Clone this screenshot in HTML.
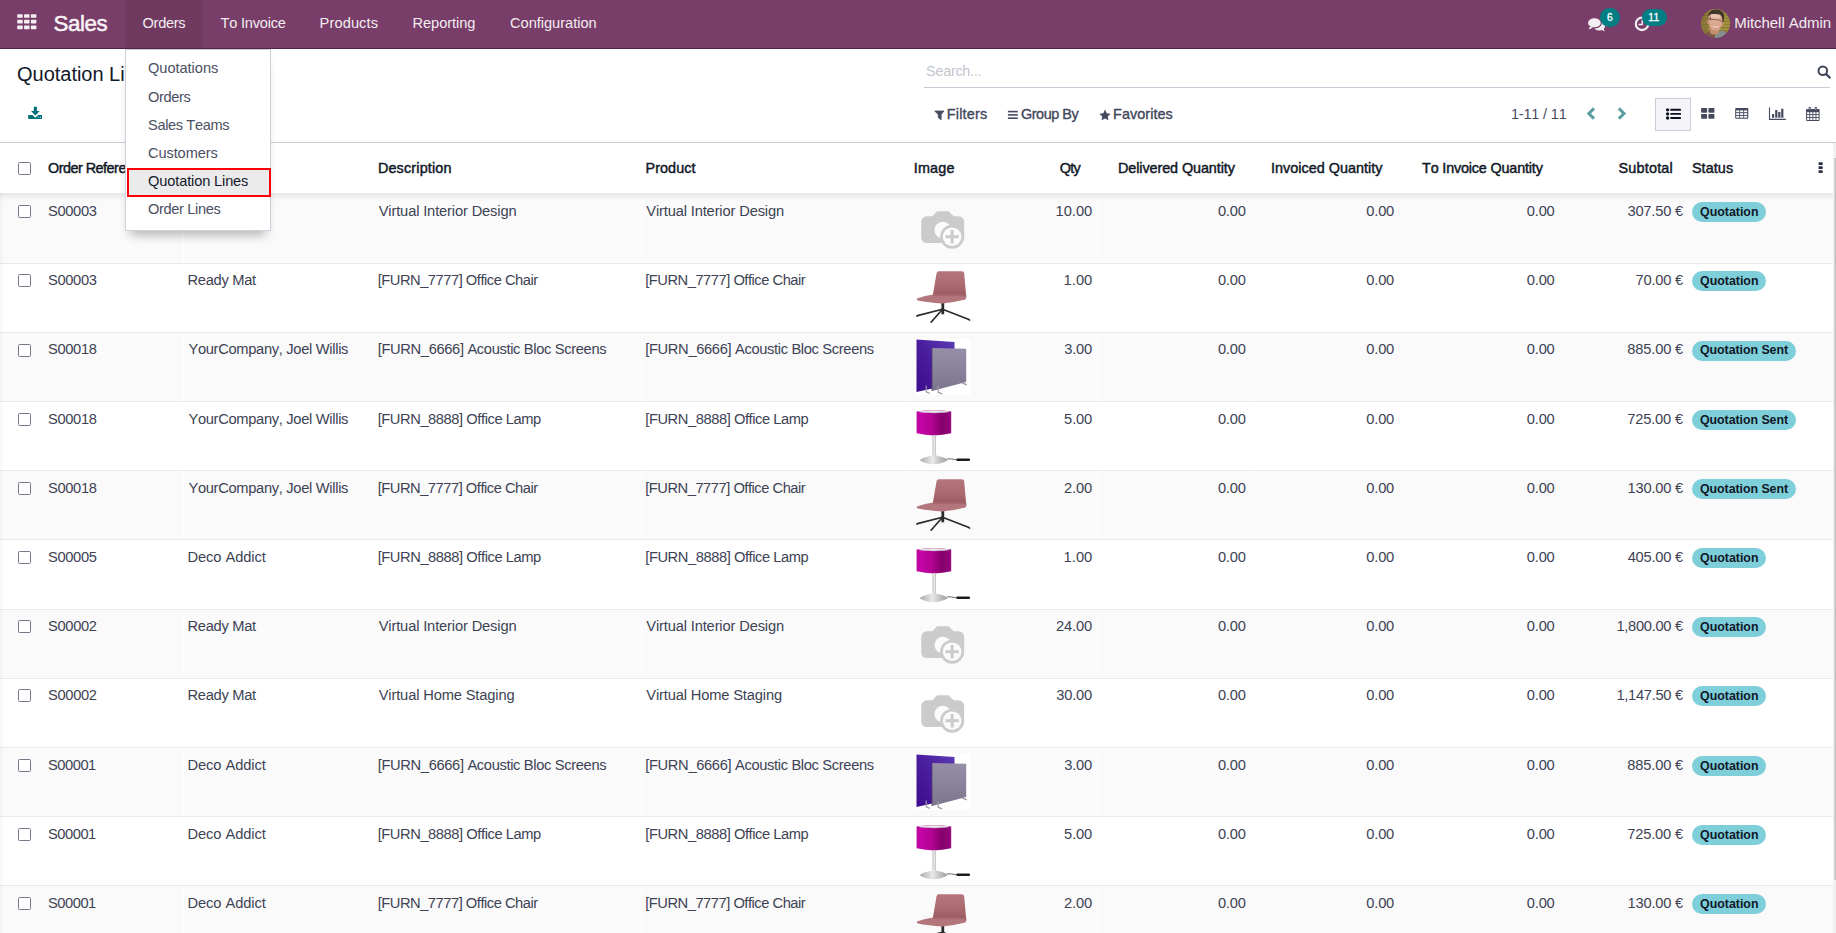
<!DOCTYPE html>
<html lang="en"><head><meta charset="utf-8"><title>Odoo - Quotation Lines</title>
<style>
html,body{margin:0;padding:0;}
body{width:1836px;height:933px;overflow:hidden;position:relative;background:#fff;font-family:"Liberation Sans", sans-serif;font-kerning:none;color:#3d4354;}
.t{position:absolute;white-space:pre;display:block;}
.abs{position:absolute;}
svg{display:block;overflow:visible;}
</style></head><body>
<div style="position:absolute;left:0px;top:194px;width:1833px;height:69px;background:#fafafb;border-bottom:1px solid #e7e9ed;"></div>
<div style="position:absolute;left:183px;top:194px;width:1px;height:69px;background:#fff;opacity:.8;"></div>
<div style="position:absolute;left:641px;top:194px;width:1px;height:69px;background:#fff;opacity:.8;"></div>
<div style="position:absolute;left:909px;top:194px;width:1px;height:69px;background:#fff;opacity:.8;"></div>
<div style="position:absolute;left:1097px;top:194px;width:1px;height:69px;background:#fff;opacity:.8;"></div>
<div style="position:absolute;left:1250px;top:194px;width:1px;height:69px;background:#fff;opacity:.8;"></div>
<div style="position:absolute;left:18px;top:205px;width:11px;height:11px;border:1px solid #74778a;border-radius:1.5px;background:#fff;"></div>
<span class="t" style="left:48.03px;top:201.81px;font-size:14.7px;line-height:18px;letter-spacing:-0.354px;">S00003</span>
<span class="t" style="left:187.54px;top:201.81px;font-size:14.7px;line-height:18px;letter-spacing:-0.308px;">Ready Mat</span>
<span class="t" style="left:378.69px;top:201.81px;font-size:14.7px;line-height:18px;letter-spacing:-0.151px;">Virtual Interior Design</span>
<span class="t" style="left:646.24px;top:201.81px;font-size:14.7px;line-height:18px;letter-spacing:-0.151px;">Virtual Interior Design</span>
<svg style="position:absolute;left:915.75px;top:199.7px;" width="56" height="56" viewBox="0 0 56 56"><path d="M10.75 16.30H16.35L21.15 11.20H32.55L37.65 16.30H42.65a5.500 5.500 0 0 1 5.500 5.500V37.50a5.500 5.500 0 0 1-5.500 5.500H10.75a5.500 5.500 0 0 1-5.500-5.500V21.80a5.500 5.500 0 0 1 5.500-5.500z" fill="#cbcbcb"/><circle cx="26.85" cy="30.10" r="8.400" fill="#fbfbfb"/><circle cx="36.15" cy="36.70" r="12" fill="#cbcbcb"/><circle cx="36.15" cy="36.70" r="9.300" fill="#fbfbfb"/><rect x="29.40" y="35.20" width="13.500" height="3" fill="#cbcbcb"/><rect x="34.65" y="29.95" width="3" height="13.500" fill="#cbcbcb"/></svg>
<span class="t" style="left:1055.58px;top:201.81px;font-size:14.7px;line-height:18px;letter-spacing:-0.023px;">10.00</span>
<span class="t" style="left:1217.93px;top:201.81px;font-size:14.7px;line-height:18px;letter-spacing:-0.221px;">0.00</span>
<span class="t" style="left:1366.33px;top:201.81px;font-size:14.7px;line-height:18px;letter-spacing:-0.221px;">0.00</span>
<span class="t" style="left:1526.83px;top:201.81px;font-size:14.7px;line-height:18px;letter-spacing:-0.221px;">0.00</span>
<span class="t" style="left:1627.44px;top:201.81px;font-size:14.7px;line-height:18px;letter-spacing:-0.208px;">307.50 €</span>
<div style="position:absolute;left:1692px;top:202px;width:74px;height:20px;background:#7fcfda;border-radius:10px;"></div>
<span class="t" style="left:1699.99px;top:203.70px;font-size:12.4px;line-height:16px;letter-spacing:0.004px;font-weight:bold;color:#111827;">Quotation</span>
<div style="position:absolute;left:0px;top:264px;width:1833px;height:68px;background:#ffffff;border-bottom:1px solid #e7e9ed;"></div>
<div style="position:absolute;left:18px;top:274px;width:11px;height:11px;border:1px solid #74778a;border-radius:1.5px;background:#fff;"></div>
<span class="t" style="left:48.03px;top:270.81px;font-size:14.7px;line-height:18px;letter-spacing:-0.354px;">S00003</span>
<span class="t" style="left:187.54px;top:270.81px;font-size:14.7px;line-height:18px;letter-spacing:-0.308px;">Ready Mat</span>
<span class="t" style="left:377.70px;top:270.81px;font-size:14.7px;line-height:18px;letter-spacing:-0.477px;">[FURN_7777] Office Chair</span>
<span class="t" style="left:645.25px;top:270.81px;font-size:14.7px;line-height:18px;letter-spacing:-0.477px;">[FURN_7777] Office Chair</span>
<svg style="position:absolute;left:915.75px;top:268.7px;" width="56" height="56" viewBox="0 0 56 56"><defs><linearGradient id="chg" x1="0" y1="0" x2="0" y2="1"><stop offset="0" stop-color="#b5757c"/><stop offset=".6" stop-color="#a9696f"/><stop offset="1" stop-color="#98585f"/></linearGradient></defs><g stroke="#2b2b2d" stroke-width="1.700" stroke-linecap="round" fill="none"><path d="M26.5 40.3L1.5 46.6"/><path d="M26.5 40.3L15.5 52.7"/><path d="M26.5 40.3L53.0 50.5"/><path d="M26.8 33.3V45.3" stroke-width="2.800" stroke-linecap="butt"/></g><path d="M0.9 46.5v1.300M53.5 50.5v1.300M15.1 52.7v1" stroke="#2b2b2d" stroke-width="1.600"/><path d="M23.0 2.3H45.8q2.300 0 2.400 2.300L50.2 27.3L16.6 27.3L20.5 4.6q.3-2.300 2.500-2.300z" fill="url(#chg)"/><path d="M0.9 29.5Q9.2 26.6 17.2 25.5L50.2 25.8Q51.0 28.8 49.5 30.5Q37.2 33.6 26.2 34.6Q12.2 33.8 1.8 31.6Q0.2 30.6 0.9 29.5z" fill="#b4767d"/><path d="M17.2 26.3L50.0 26.6" stroke="#9a5b62" stroke-width="1.200" opacity=".55"/></svg>
<span class="t" style="left:1063.58px;top:270.81px;font-size:14.7px;line-height:18px;letter-spacing:0.028px;">1.00</span>
<span class="t" style="left:1217.93px;top:270.81px;font-size:14.7px;line-height:18px;letter-spacing:-0.221px;">0.00</span>
<span class="t" style="left:1366.33px;top:270.81px;font-size:14.7px;line-height:18px;letter-spacing:-0.221px;">0.00</span>
<span class="t" style="left:1526.83px;top:270.81px;font-size:14.7px;line-height:18px;letter-spacing:-0.221px;">0.00</span>
<span class="t" style="left:1635.55px;top:270.81px;font-size:14.7px;line-height:18px;letter-spacing:-0.231px;">70.00 €</span>
<div style="position:absolute;left:1692px;top:271px;width:74px;height:20px;background:#7fcfda;border-radius:10px;"></div>
<span class="t" style="left:1699.99px;top:272.70px;font-size:12.4px;line-height:16px;letter-spacing:0.004px;font-weight:bold;color:#111827;">Quotation</span>
<div style="position:absolute;left:0px;top:333px;width:1833px;height:68px;background:#fafafb;border-bottom:1px solid #e7e9ed;"></div>
<div style="position:absolute;left:183px;top:333px;width:1px;height:68px;background:#fff;opacity:.8;"></div>
<div style="position:absolute;left:641px;top:333px;width:1px;height:68px;background:#fff;opacity:.8;"></div>
<div style="position:absolute;left:909px;top:333px;width:1px;height:68px;background:#fff;opacity:.8;"></div>
<div style="position:absolute;left:1097px;top:333px;width:1px;height:68px;background:#fff;opacity:.8;"></div>
<div style="position:absolute;left:1250px;top:333px;width:1px;height:68px;background:#fff;opacity:.8;"></div>
<div style="position:absolute;left:18px;top:344px;width:11px;height:11px;border:1px solid #74778a;border-radius:1.5px;background:#fff;"></div>
<span class="t" style="left:48.03px;top:339.81px;font-size:14.7px;line-height:18px;letter-spacing:-0.355px;">S00018</span>
<span class="t" style="left:188.43px;top:339.81px;font-size:14.7px;line-height:18px;letter-spacing:-0.318px;">YourCompany, Joel Willis</span>
<span class="t" style="left:377.70px;top:339.81px;font-size:14.7px;line-height:18px;letter-spacing:-0.348px;">[FURN_6666] Acoustic Bloc Screens</span>
<span class="t" style="left:645.25px;top:339.81px;font-size:14.7px;line-height:18px;letter-spacing:-0.348px;">[FURN_6666] Acoustic Bloc Screens</span>
<svg style="position:absolute;left:915.75px;top:338.7px;" width="56" height="56" viewBox="0 0 56 56"><defs><linearGradient id="scg1" x1="0" y1="1" x2="1" y2="0"><stop offset="0" stop-color="#3f0b8e"/><stop offset=".5" stop-color="#4a1d9e"/><stop offset="1" stop-color="#5b3cb4"/></linearGradient><linearGradient id="scg2" x1="0" y1="0" x2="0" y2="1"><stop offset="0" stop-color="#978ea8"/><stop offset="1" stop-color="#7d758e"/></linearGradient></defs><rect x="0" y="0" width="54.500" height="55.500" fill="#fff"/><path d="M0.5 0.6L38.5 2.9V44.4L0.5 52.9z" fill="url(#scg1)"/><path d="M16.0 8.9L50.2 9.7V43.1L16.0 52.1z" fill="url(#scg2)"/><path d="M16.0 8.9V52.1" stroke="#4a4660" stroke-width=".8"/><g stroke="#9a9aa3" stroke-width="1.200" fill="none"><path d="M10.2 46.4V52.9l3.500 1.500"/><path d="M22.2 46.9V53.4l4 1.500"/><path d="M46.2 43.9l4.500 2"/></g></svg>
<span class="t" style="left:1064.14px;top:339.81px;font-size:14.7px;line-height:18px;letter-spacing:-0.159px;">3.00</span>
<span class="t" style="left:1217.93px;top:339.81px;font-size:14.7px;line-height:18px;letter-spacing:-0.221px;">0.00</span>
<span class="t" style="left:1366.33px;top:339.81px;font-size:14.7px;line-height:18px;letter-spacing:-0.221px;">0.00</span>
<span class="t" style="left:1526.83px;top:339.81px;font-size:14.7px;line-height:18px;letter-spacing:-0.221px;">0.00</span>
<span class="t" style="left:1627.36px;top:339.81px;font-size:14.7px;line-height:18px;letter-spacing:-0.196px;">885.00 €</span>
<div style="position:absolute;left:1692px;top:341px;width:104.25px;height:20px;background:#7fcfda;border-radius:10px;"></div>
<span class="t" style="left:1699.99px;top:341.70px;font-size:12.4px;line-height:16px;letter-spacing:-0.054px;font-weight:bold;color:#111827;">Quotation Sent</span>
<div style="position:absolute;left:0px;top:402px;width:1833px;height:68px;background:#ffffff;border-bottom:1px solid #e7e9ed;"></div>
<div style="position:absolute;left:18px;top:413px;width:11px;height:11px;border:1px solid #74778a;border-radius:1.5px;background:#fff;"></div>
<span class="t" style="left:48.03px;top:409.81px;font-size:14.7px;line-height:18px;letter-spacing:-0.355px;">S00018</span>
<span class="t" style="left:188.43px;top:409.81px;font-size:14.7px;line-height:18px;letter-spacing:-0.318px;">YourCompany, Joel Willis</span>
<span class="t" style="left:377.70px;top:409.81px;font-size:14.7px;line-height:18px;letter-spacing:-0.434px;">[FURN_8888] Office Lamp</span>
<span class="t" style="left:645.25px;top:409.81px;font-size:14.7px;line-height:18px;letter-spacing:-0.434px;">[FURN_8888] Office Lamp</span>
<svg style="position:absolute;left:915.75px;top:407.7px;" width="56" height="58" viewBox="0 0 56 58"><defs><linearGradient id="lmg" x1="0" x2="1"><stop offset="0" stop-color="#b8059b"/><stop offset=".12" stop-color="#c603a9"/><stop offset=".45" stop-color="#b00391"/><stop offset=".72" stop-color="#87006e"/><stop offset=".9" stop-color="#8d0475"/><stop offset="1" stop-color="#a00c86"/></linearGradient><linearGradient id="lmb" x1="0" x2="1"><stop offset="0" stop-color="#a9a9a9"/><stop offset=".45" stop-color="#e9e9e9"/><stop offset="1" stop-color="#9c9c9c"/></linearGradient><linearGradient id="lms" x1="0" x2="1"><stop offset="0" stop-color="#b5b5b5"/><stop offset=".5" stop-color="#f2f2f2"/><stop offset="1" stop-color="#b0b0b0"/></linearGradient></defs><path d="M0.6 3.6Q18.0 0.7 35.2 3.6V25.3Q18.0 29.5 0.6 25.3z" fill="url(#lmg)"/><ellipse cx="18.0" cy="3.6" rx="15.300" ry="1.350" fill="#ece8ec"/><path d="M2.9 3.8Q18.0 5.9 33.0 3.8" stroke="#bdb5bd" stroke-width=".5" fill="none"/><rect x="16.5" y="27.3" width="3.300" height="21.500" fill="url(#lms)"/><path d="M3.8 52.6Q5.2 49.9 12.2 48.5Q15.8 47.8 16.5 46.9H19.8Q20.5 47.8 24.2 48.5Q30.2 49.9 31.5 52.6Q24.2 56.5 17.5 56.3Q10.2 56.5 3.8 52.6z" fill="url(#lmb)"/><path d="M30.8 50.8Q35.2 50.6 40.2 51.8" fill="none" stroke="#444" stroke-width=".8"/><path d="M41.5 51.8H52.8" stroke="#1d1d1f" stroke-width="2.600" stroke-linecap="round"/></svg>
<span class="t" style="left:1064.11px;top:409.81px;font-size:14.7px;line-height:18px;letter-spacing:-0.149px;">5.00</span>
<span class="t" style="left:1217.93px;top:409.81px;font-size:14.7px;line-height:18px;letter-spacing:-0.221px;">0.00</span>
<span class="t" style="left:1366.33px;top:409.81px;font-size:14.7px;line-height:18px;letter-spacing:-0.221px;">0.00</span>
<span class="t" style="left:1526.83px;top:409.81px;font-size:14.7px;line-height:18px;letter-spacing:-0.221px;">0.00</span>
<span class="t" style="left:1627.25px;top:409.81px;font-size:14.7px;line-height:18px;letter-spacing:-0.180px;">725.00 €</span>
<div style="position:absolute;left:1692px;top:410px;width:104.25px;height:20px;background:#7fcfda;border-radius:10px;"></div>
<span class="t" style="left:1699.99px;top:411.70px;font-size:12.4px;line-height:16px;letter-spacing:-0.054px;font-weight:bold;color:#111827;">Quotation Sent</span>
<div style="position:absolute;left:0px;top:471px;width:1833px;height:68px;background:#fafafb;border-bottom:1px solid #e7e9ed;"></div>
<div style="position:absolute;left:183px;top:471px;width:1px;height:68px;background:#fff;opacity:.8;"></div>
<div style="position:absolute;left:641px;top:471px;width:1px;height:68px;background:#fff;opacity:.8;"></div>
<div style="position:absolute;left:909px;top:471px;width:1px;height:68px;background:#fff;opacity:.8;"></div>
<div style="position:absolute;left:1097px;top:471px;width:1px;height:68px;background:#fff;opacity:.8;"></div>
<div style="position:absolute;left:1250px;top:471px;width:1px;height:68px;background:#fff;opacity:.8;"></div>
<div style="position:absolute;left:18px;top:482px;width:11px;height:11px;border:1px solid #74778a;border-radius:1.5px;background:#fff;"></div>
<span class="t" style="left:48.03px;top:478.81px;font-size:14.7px;line-height:18px;letter-spacing:-0.355px;">S00018</span>
<span class="t" style="left:188.43px;top:478.81px;font-size:14.7px;line-height:18px;letter-spacing:-0.318px;">YourCompany, Joel Willis</span>
<span class="t" style="left:377.70px;top:478.81px;font-size:14.7px;line-height:18px;letter-spacing:-0.477px;">[FURN_7777] Office Chair</span>
<span class="t" style="left:645.25px;top:478.81px;font-size:14.7px;line-height:18px;letter-spacing:-0.477px;">[FURN_7777] Office Chair</span>
<svg style="position:absolute;left:915.75px;top:476.7px;" width="56" height="56" viewBox="0 0 56 56"><defs><linearGradient id="chg" x1="0" y1="0" x2="0" y2="1"><stop offset="0" stop-color="#b5757c"/><stop offset=".6" stop-color="#a9696f"/><stop offset="1" stop-color="#98585f"/></linearGradient></defs><g stroke="#2b2b2d" stroke-width="1.700" stroke-linecap="round" fill="none"><path d="M26.5 40.3L1.5 46.6"/><path d="M26.5 40.3L15.5 52.7"/><path d="M26.5 40.3L53.0 50.5"/><path d="M26.8 33.3V45.3" stroke-width="2.800" stroke-linecap="butt"/></g><path d="M0.9 46.5v1.300M53.5 50.5v1.300M15.1 52.7v1" stroke="#2b2b2d" stroke-width="1.600"/><path d="M23.0 2.3H45.8q2.300 0 2.400 2.300L50.2 27.3L16.6 27.3L20.5 4.6q.3-2.300 2.500-2.300z" fill="url(#chg)"/><path d="M0.9 29.5Q9.2 26.6 17.2 25.5L50.2 25.8Q51.0 28.8 49.5 30.5Q37.2 33.6 26.2 34.6Q12.2 33.8 1.8 31.6Q0.2 30.6 0.9 29.5z" fill="#b4767d"/><path d="M17.2 26.3L50.0 26.6" stroke="#9a5b62" stroke-width="1.200" opacity=".55"/></svg>
<span class="t" style="left:1063.96px;top:478.81px;font-size:14.7px;line-height:18px;letter-spacing:-0.099px;">2.00</span>
<span class="t" style="left:1217.93px;top:478.81px;font-size:14.7px;line-height:18px;letter-spacing:-0.221px;">0.00</span>
<span class="t" style="left:1366.33px;top:478.81px;font-size:14.7px;line-height:18px;letter-spacing:-0.221px;">0.00</span>
<span class="t" style="left:1526.83px;top:478.81px;font-size:14.7px;line-height:18px;letter-spacing:-0.221px;">0.00</span>
<span class="t" style="left:1627.58px;top:478.81px;font-size:14.7px;line-height:18px;letter-spacing:-0.228px;">130.00 €</span>
<div style="position:absolute;left:1692px;top:479px;width:104.25px;height:20px;background:#7fcfda;border-radius:10px;"></div>
<span class="t" style="left:1699.99px;top:480.70px;font-size:12.4px;line-height:16px;letter-spacing:-0.054px;font-weight:bold;color:#111827;">Quotation Sent</span>
<div style="position:absolute;left:0px;top:540px;width:1833px;height:69px;background:#ffffff;border-bottom:1px solid #e7e9ed;"></div>
<div style="position:absolute;left:18px;top:551px;width:11px;height:11px;border:1px solid #74778a;border-radius:1.5px;background:#fff;"></div>
<span class="t" style="left:48.03px;top:547.81px;font-size:14.7px;line-height:18px;letter-spacing:-0.359px;">S00005</span>
<span class="t" style="left:187.54px;top:547.81px;font-size:14.7px;line-height:18px;letter-spacing:-0.094px;">Deco Addict</span>
<span class="t" style="left:377.70px;top:547.81px;font-size:14.7px;line-height:18px;letter-spacing:-0.434px;">[FURN_8888] Office Lamp</span>
<span class="t" style="left:645.25px;top:547.81px;font-size:14.7px;line-height:18px;letter-spacing:-0.434px;">[FURN_8888] Office Lamp</span>
<svg style="position:absolute;left:915.75px;top:545.7px;" width="56" height="58" viewBox="0 0 56 58"><defs><linearGradient id="lmg" x1="0" x2="1"><stop offset="0" stop-color="#b8059b"/><stop offset=".12" stop-color="#c603a9"/><stop offset=".45" stop-color="#b00391"/><stop offset=".72" stop-color="#87006e"/><stop offset=".9" stop-color="#8d0475"/><stop offset="1" stop-color="#a00c86"/></linearGradient><linearGradient id="lmb" x1="0" x2="1"><stop offset="0" stop-color="#a9a9a9"/><stop offset=".45" stop-color="#e9e9e9"/><stop offset="1" stop-color="#9c9c9c"/></linearGradient><linearGradient id="lms" x1="0" x2="1"><stop offset="0" stop-color="#b5b5b5"/><stop offset=".5" stop-color="#f2f2f2"/><stop offset="1" stop-color="#b0b0b0"/></linearGradient></defs><path d="M0.6 3.6Q18.0 0.7 35.2 3.6V25.3Q18.0 29.5 0.6 25.3z" fill="url(#lmg)"/><ellipse cx="18.0" cy="3.6" rx="15.300" ry="1.350" fill="#ece8ec"/><path d="M2.9 3.8Q18.0 5.9 33.0 3.8" stroke="#bdb5bd" stroke-width=".5" fill="none"/><rect x="16.5" y="27.3" width="3.300" height="21.500" fill="url(#lms)"/><path d="M3.8 52.6Q5.2 49.9 12.2 48.5Q15.8 47.8 16.5 46.9H19.8Q20.5 47.8 24.2 48.5Q30.2 49.9 31.5 52.6Q24.2 56.5 17.5 56.3Q10.2 56.5 3.8 52.6z" fill="url(#lmb)"/><path d="M30.8 50.8Q35.2 50.6 40.2 51.8" fill="none" stroke="#444" stroke-width=".8"/><path d="M41.5 51.8H52.8" stroke="#1d1d1f" stroke-width="2.600" stroke-linecap="round"/></svg>
<span class="t" style="left:1063.58px;top:547.81px;font-size:14.7px;line-height:18px;letter-spacing:0.028px;">1.00</span>
<span class="t" style="left:1217.93px;top:547.81px;font-size:14.7px;line-height:18px;letter-spacing:-0.221px;">0.00</span>
<span class="t" style="left:1366.33px;top:547.81px;font-size:14.7px;line-height:18px;letter-spacing:-0.221px;">0.00</span>
<span class="t" style="left:1526.83px;top:547.81px;font-size:14.7px;line-height:18px;letter-spacing:-0.221px;">0.00</span>
<span class="t" style="left:1627.66px;top:547.81px;font-size:14.7px;line-height:18px;letter-spacing:-0.239px;">405.00 €</span>
<div style="position:absolute;left:1692px;top:548px;width:74px;height:20px;background:#7fcfda;border-radius:10px;"></div>
<span class="t" style="left:1699.99px;top:549.70px;font-size:12.4px;line-height:16px;letter-spacing:0.004px;font-weight:bold;color:#111827;">Quotation</span>
<div style="position:absolute;left:0px;top:610px;width:1833px;height:68px;background:#fafafb;border-bottom:1px solid #e7e9ed;"></div>
<div style="position:absolute;left:183px;top:610px;width:1px;height:68px;background:#fff;opacity:.8;"></div>
<div style="position:absolute;left:641px;top:610px;width:1px;height:68px;background:#fff;opacity:.8;"></div>
<div style="position:absolute;left:909px;top:610px;width:1px;height:68px;background:#fff;opacity:.8;"></div>
<div style="position:absolute;left:1097px;top:610px;width:1px;height:68px;background:#fff;opacity:.8;"></div>
<div style="position:absolute;left:1250px;top:610px;width:1px;height:68px;background:#fff;opacity:.8;"></div>
<div style="position:absolute;left:18px;top:620px;width:11px;height:11px;border:1px solid #74778a;border-radius:1.5px;background:#fff;"></div>
<span class="t" style="left:48.03px;top:616.81px;font-size:14.7px;line-height:18px;letter-spacing:-0.335px;">S00002</span>
<span class="t" style="left:187.54px;top:616.81px;font-size:14.7px;line-height:18px;letter-spacing:-0.308px;">Ready Mat</span>
<span class="t" style="left:378.69px;top:616.81px;font-size:14.7px;line-height:18px;letter-spacing:-0.151px;">Virtual Interior Design</span>
<span class="t" style="left:646.24px;top:616.81px;font-size:14.7px;line-height:18px;letter-spacing:-0.151px;">Virtual Interior Design</span>
<svg style="position:absolute;left:915.75px;top:614.7px;" width="56" height="56" viewBox="0 0 56 56"><path d="M10.75 16.30H16.35L21.15 11.20H32.55L37.65 16.30H42.65a5.500 5.500 0 0 1 5.500 5.500V37.50a5.500 5.500 0 0 1-5.500 5.500H10.75a5.500 5.500 0 0 1-5.500-5.500V21.80a5.500 5.500 0 0 1 5.500-5.500z" fill="#cbcbcb"/><circle cx="26.85" cy="30.10" r="8.400" fill="#fbfbfb"/><circle cx="36.15" cy="36.70" r="12" fill="#cbcbcb"/><circle cx="36.15" cy="36.70" r="9.300" fill="#fbfbfb"/><rect x="29.40" y="35.20" width="13.500" height="3" fill="#cbcbcb"/><rect x="34.65" y="29.95" width="3" height="13.500" fill="#cbcbcb"/></svg>
<span class="t" style="left:1055.96px;top:616.81px;font-size:14.7px;line-height:18px;letter-spacing:-0.118px;">24.00</span>
<span class="t" style="left:1217.93px;top:616.81px;font-size:14.7px;line-height:18px;letter-spacing:-0.221px;">0.00</span>
<span class="t" style="left:1366.33px;top:616.81px;font-size:14.7px;line-height:18px;letter-spacing:-0.221px;">0.00</span>
<span class="t" style="left:1526.83px;top:616.81px;font-size:14.7px;line-height:18px;letter-spacing:-0.221px;">0.00</span>
<span class="t" style="left:1616.38px;top:616.81px;font-size:14.7px;line-height:18px;letter-spacing:-0.295px;">1,800.00 €</span>
<div style="position:absolute;left:1692px;top:617px;width:74px;height:20px;background:#7fcfda;border-radius:10px;"></div>
<span class="t" style="left:1699.99px;top:618.70px;font-size:12.4px;line-height:16px;letter-spacing:0.004px;font-weight:bold;color:#111827;">Quotation</span>
<div style="position:absolute;left:0px;top:679px;width:1833px;height:68px;background:#ffffff;border-bottom:1px solid #e7e9ed;"></div>
<div style="position:absolute;left:18px;top:689px;width:11px;height:11px;border:1px solid #74778a;border-radius:1.5px;background:#fff;"></div>
<span class="t" style="left:48.03px;top:685.81px;font-size:14.7px;line-height:18px;letter-spacing:-0.335px;">S00002</span>
<span class="t" style="left:187.54px;top:685.81px;font-size:14.7px;line-height:18px;letter-spacing:-0.308px;">Ready Mat</span>
<span class="t" style="left:378.69px;top:685.81px;font-size:14.7px;line-height:18px;letter-spacing:-0.152px;">Virtual Home Staging</span>
<span class="t" style="left:646.24px;top:685.81px;font-size:14.7px;line-height:18px;letter-spacing:-0.152px;">Virtual Home Staging</span>
<svg style="position:absolute;left:915.75px;top:683.7px;" width="56" height="56" viewBox="0 0 56 56"><path d="M10.75 16.30H16.35L21.15 11.20H32.55L37.65 16.30H42.65a5.500 5.500 0 0 1 5.500 5.500V37.50a5.500 5.500 0 0 1-5.500 5.500H10.75a5.500 5.500 0 0 1-5.500-5.500V21.80a5.500 5.500 0 0 1 5.500-5.500z" fill="#cbcbcb"/><circle cx="26.85" cy="30.10" r="8.400" fill="#fbfbfb"/><circle cx="36.15" cy="36.70" r="12" fill="#cbcbcb"/><circle cx="36.15" cy="36.70" r="9.300" fill="#fbfbfb"/><rect x="29.40" y="35.20" width="13.500" height="3" fill="#cbcbcb"/><rect x="34.65" y="29.95" width="3" height="13.500" fill="#cbcbcb"/></svg>
<span class="t" style="left:1056.14px;top:685.81px;font-size:14.7px;line-height:18px;letter-spacing:-0.163px;">30.00</span>
<span class="t" style="left:1217.93px;top:685.81px;font-size:14.7px;line-height:18px;letter-spacing:-0.221px;">0.00</span>
<span class="t" style="left:1366.33px;top:685.81px;font-size:14.7px;line-height:18px;letter-spacing:-0.221px;">0.00</span>
<span class="t" style="left:1526.83px;top:685.81px;font-size:14.7px;line-height:18px;letter-spacing:-0.221px;">0.00</span>
<span class="t" style="left:1616.38px;top:685.81px;font-size:14.7px;line-height:18px;letter-spacing:-0.295px;">1,147.50 €</span>
<div style="position:absolute;left:1692px;top:686px;width:74px;height:20px;background:#7fcfda;border-radius:10px;"></div>
<span class="t" style="left:1699.99px;top:687.70px;font-size:12.4px;line-height:16px;letter-spacing:0.004px;font-weight:bold;color:#111827;">Quotation</span>
<div style="position:absolute;left:0px;top:748px;width:1833px;height:68px;background:#fafafb;border-bottom:1px solid #e7e9ed;"></div>
<div style="position:absolute;left:183px;top:748px;width:1px;height:68px;background:#fff;opacity:.8;"></div>
<div style="position:absolute;left:641px;top:748px;width:1px;height:68px;background:#fff;opacity:.8;"></div>
<div style="position:absolute;left:909px;top:748px;width:1px;height:68px;background:#fff;opacity:.8;"></div>
<div style="position:absolute;left:1097px;top:748px;width:1px;height:68px;background:#fff;opacity:.8;"></div>
<div style="position:absolute;left:1250px;top:748px;width:1px;height:68px;background:#fff;opacity:.8;"></div>
<div style="position:absolute;left:18px;top:759px;width:11px;height:11px;border:1px solid #74778a;border-radius:1.5px;background:#fff;"></div>
<span class="t" style="left:48.03px;top:755.81px;font-size:14.7px;line-height:18px;letter-spacing:-0.479px;">S00001</span>
<span class="t" style="left:187.54px;top:755.81px;font-size:14.7px;line-height:18px;letter-spacing:-0.094px;">Deco Addict</span>
<span class="t" style="left:377.70px;top:755.81px;font-size:14.7px;line-height:18px;letter-spacing:-0.348px;">[FURN_6666] Acoustic Bloc Screens</span>
<span class="t" style="left:645.25px;top:755.81px;font-size:14.7px;line-height:18px;letter-spacing:-0.348px;">[FURN_6666] Acoustic Bloc Screens</span>
<svg style="position:absolute;left:915.75px;top:753.7px;" width="56" height="56" viewBox="0 0 56 56"><defs><linearGradient id="scg1" x1="0" y1="1" x2="1" y2="0"><stop offset="0" stop-color="#3f0b8e"/><stop offset=".5" stop-color="#4a1d9e"/><stop offset="1" stop-color="#5b3cb4"/></linearGradient><linearGradient id="scg2" x1="0" y1="0" x2="0" y2="1"><stop offset="0" stop-color="#978ea8"/><stop offset="1" stop-color="#7d758e"/></linearGradient></defs><rect x="0" y="0" width="54.500" height="55.500" fill="#fff"/><path d="M0.5 0.6L38.5 2.9V44.4L0.5 52.9z" fill="url(#scg1)"/><path d="M16.0 8.9L50.2 9.7V43.1L16.0 52.1z" fill="url(#scg2)"/><path d="M16.0 8.9V52.1" stroke="#4a4660" stroke-width=".8"/><g stroke="#9a9aa3" stroke-width="1.200" fill="none"><path d="M10.2 46.4V52.9l3.500 1.500"/><path d="M22.2 46.9V53.4l4 1.500"/><path d="M46.2 43.9l4.500 2"/></g></svg>
<span class="t" style="left:1064.14px;top:755.81px;font-size:14.7px;line-height:18px;letter-spacing:-0.159px;">3.00</span>
<span class="t" style="left:1217.93px;top:755.81px;font-size:14.7px;line-height:18px;letter-spacing:-0.221px;">0.00</span>
<span class="t" style="left:1366.33px;top:755.81px;font-size:14.7px;line-height:18px;letter-spacing:-0.221px;">0.00</span>
<span class="t" style="left:1526.83px;top:755.81px;font-size:14.7px;line-height:18px;letter-spacing:-0.221px;">0.00</span>
<span class="t" style="left:1627.36px;top:755.81px;font-size:14.7px;line-height:18px;letter-spacing:-0.196px;">885.00 €</span>
<div style="position:absolute;left:1692px;top:756px;width:74px;height:20px;background:#7fcfda;border-radius:10px;"></div>
<span class="t" style="left:1699.99px;top:757.70px;font-size:12.4px;line-height:16px;letter-spacing:0.004px;font-weight:bold;color:#111827;">Quotation</span>
<div style="position:absolute;left:0px;top:817px;width:1833px;height:68px;background:#ffffff;border-bottom:1px solid #e7e9ed;"></div>
<div style="position:absolute;left:18px;top:828px;width:11px;height:11px;border:1px solid #74778a;border-radius:1.5px;background:#fff;"></div>
<span class="t" style="left:48.03px;top:824.81px;font-size:14.7px;line-height:18px;letter-spacing:-0.479px;">S00001</span>
<span class="t" style="left:187.54px;top:824.81px;font-size:14.7px;line-height:18px;letter-spacing:-0.094px;">Deco Addict</span>
<span class="t" style="left:377.70px;top:824.81px;font-size:14.7px;line-height:18px;letter-spacing:-0.434px;">[FURN_8888] Office Lamp</span>
<span class="t" style="left:645.25px;top:824.81px;font-size:14.7px;line-height:18px;letter-spacing:-0.434px;">[FURN_8888] Office Lamp</span>
<svg style="position:absolute;left:915.75px;top:822.7px;" width="56" height="58" viewBox="0 0 56 58"><defs><linearGradient id="lmg" x1="0" x2="1"><stop offset="0" stop-color="#b8059b"/><stop offset=".12" stop-color="#c603a9"/><stop offset=".45" stop-color="#b00391"/><stop offset=".72" stop-color="#87006e"/><stop offset=".9" stop-color="#8d0475"/><stop offset="1" stop-color="#a00c86"/></linearGradient><linearGradient id="lmb" x1="0" x2="1"><stop offset="0" stop-color="#a9a9a9"/><stop offset=".45" stop-color="#e9e9e9"/><stop offset="1" stop-color="#9c9c9c"/></linearGradient><linearGradient id="lms" x1="0" x2="1"><stop offset="0" stop-color="#b5b5b5"/><stop offset=".5" stop-color="#f2f2f2"/><stop offset="1" stop-color="#b0b0b0"/></linearGradient></defs><path d="M0.6 3.6Q18.0 0.7 35.2 3.6V25.3Q18.0 29.5 0.6 25.3z" fill="url(#lmg)"/><ellipse cx="18.0" cy="3.6" rx="15.300" ry="1.350" fill="#ece8ec"/><path d="M2.9 3.8Q18.0 5.9 33.0 3.8" stroke="#bdb5bd" stroke-width=".5" fill="none"/><rect x="16.5" y="27.3" width="3.300" height="21.500" fill="url(#lms)"/><path d="M3.8 52.6Q5.2 49.9 12.2 48.5Q15.8 47.8 16.5 46.9H19.8Q20.5 47.8 24.2 48.5Q30.2 49.9 31.5 52.6Q24.2 56.5 17.5 56.3Q10.2 56.5 3.8 52.6z" fill="url(#lmb)"/><path d="M30.8 50.8Q35.2 50.6 40.2 51.8" fill="none" stroke="#444" stroke-width=".8"/><path d="M41.5 51.8H52.8" stroke="#1d1d1f" stroke-width="2.600" stroke-linecap="round"/></svg>
<span class="t" style="left:1064.11px;top:824.81px;font-size:14.7px;line-height:18px;letter-spacing:-0.149px;">5.00</span>
<span class="t" style="left:1217.93px;top:824.81px;font-size:14.7px;line-height:18px;letter-spacing:-0.221px;">0.00</span>
<span class="t" style="left:1366.33px;top:824.81px;font-size:14.7px;line-height:18px;letter-spacing:-0.221px;">0.00</span>
<span class="t" style="left:1526.83px;top:824.81px;font-size:14.7px;line-height:18px;letter-spacing:-0.221px;">0.00</span>
<span class="t" style="left:1627.25px;top:824.81px;font-size:14.7px;line-height:18px;letter-spacing:-0.180px;">725.00 €</span>
<div style="position:absolute;left:1692px;top:825px;width:74px;height:20px;background:#7fcfda;border-radius:10px;"></div>
<span class="t" style="left:1699.99px;top:826.70px;font-size:12.4px;line-height:16px;letter-spacing:0.004px;font-weight:bold;color:#111827;">Quotation</span>
<div style="position:absolute;left:0px;top:886px;width:1833px;height:68px;background:#fafafb;border-bottom:1px solid #e7e9ed;"></div>
<div style="position:absolute;left:183px;top:886px;width:1px;height:68px;background:#fff;opacity:.8;"></div>
<div style="position:absolute;left:641px;top:886px;width:1px;height:68px;background:#fff;opacity:.8;"></div>
<div style="position:absolute;left:909px;top:886px;width:1px;height:68px;background:#fff;opacity:.8;"></div>
<div style="position:absolute;left:1097px;top:886px;width:1px;height:68px;background:#fff;opacity:.8;"></div>
<div style="position:absolute;left:1250px;top:886px;width:1px;height:68px;background:#fff;opacity:.8;"></div>
<div style="position:absolute;left:18px;top:897px;width:11px;height:11px;border:1px solid #74778a;border-radius:1.5px;background:#fff;"></div>
<span class="t" style="left:48.03px;top:893.81px;font-size:14.7px;line-height:18px;letter-spacing:-0.479px;">S00001</span>
<span class="t" style="left:187.54px;top:893.81px;font-size:14.7px;line-height:18px;letter-spacing:-0.094px;">Deco Addict</span>
<span class="t" style="left:377.70px;top:893.81px;font-size:14.7px;line-height:18px;letter-spacing:-0.477px;">[FURN_7777] Office Chair</span>
<span class="t" style="left:645.25px;top:893.81px;font-size:14.7px;line-height:18px;letter-spacing:-0.477px;">[FURN_7777] Office Chair</span>
<svg style="position:absolute;left:915.75px;top:891.7px;" width="56" height="56" viewBox="0 0 56 56"><defs><linearGradient id="chg" x1="0" y1="0" x2="0" y2="1"><stop offset="0" stop-color="#b5757c"/><stop offset=".6" stop-color="#a9696f"/><stop offset="1" stop-color="#98585f"/></linearGradient></defs><g stroke="#2b2b2d" stroke-width="1.700" stroke-linecap="round" fill="none"><path d="M26.5 40.3L1.5 46.6"/><path d="M26.5 40.3L15.5 52.7"/><path d="M26.5 40.3L53.0 50.5"/><path d="M26.8 33.3V45.3" stroke-width="2.800" stroke-linecap="butt"/></g><path d="M0.9 46.5v1.300M53.5 50.5v1.300M15.1 52.7v1" stroke="#2b2b2d" stroke-width="1.600"/><path d="M23.0 2.3H45.8q2.300 0 2.400 2.300L50.2 27.3L16.6 27.3L20.5 4.6q.3-2.300 2.500-2.300z" fill="url(#chg)"/><path d="M0.9 29.5Q9.2 26.6 17.2 25.5L50.2 25.8Q51.0 28.8 49.5 30.5Q37.2 33.6 26.2 34.6Q12.2 33.8 1.8 31.6Q0.2 30.6 0.9 29.5z" fill="#b4767d"/><path d="M17.2 26.3L50.0 26.6" stroke="#9a5b62" stroke-width="1.200" opacity=".55"/></svg>
<span class="t" style="left:1063.96px;top:893.81px;font-size:14.7px;line-height:18px;letter-spacing:-0.099px;">2.00</span>
<span class="t" style="left:1217.93px;top:893.81px;font-size:14.7px;line-height:18px;letter-spacing:-0.221px;">0.00</span>
<span class="t" style="left:1366.33px;top:893.81px;font-size:14.7px;line-height:18px;letter-spacing:-0.221px;">0.00</span>
<span class="t" style="left:1526.83px;top:893.81px;font-size:14.7px;line-height:18px;letter-spacing:-0.221px;">0.00</span>
<span class="t" style="left:1627.58px;top:893.81px;font-size:14.7px;line-height:18px;letter-spacing:-0.228px;">130.00 €</span>
<div style="position:absolute;left:1692px;top:894px;width:74px;height:20px;background:#7fcfda;border-radius:10px;"></div>
<span class="t" style="left:1699.99px;top:895.70px;font-size:12.4px;line-height:16px;letter-spacing:0.004px;font-weight:bold;color:#111827;">Quotation</span>
<div style="position:absolute;left:0px;top:193px;width:1833px;height:9px;background:linear-gradient(to bottom, rgba(0,0,0,.09), rgba(0,0,0,.03) 45%, rgba(0,0,0,0));"></div>
<div style="position:absolute;left:0px;top:193px;width:4px;height:740px;background:linear-gradient(to right, rgba(0,0,0,.035), rgba(0,0,0,0));"></div>
<div style="position:absolute;left:0px;top:143px;width:1833px;height:50px;background:#fff;"></div>
<div style="position:absolute;left:18px;top:162px;width:11px;height:11px;border:1px solid #74778a;border-radius:1.5px;background:#fff;"></div>
<span class="t" style="left:48.02px;top:158.71px;font-size:14.4px;line-height:18px;letter-spacing:-0.510px;color:#111827;-webkit-text-stroke:0.45px;">Order Reference</span>
<span class="t" style="left:188.37px;top:158.71px;font-size:14.4px;line-height:18px;letter-spacing:-0.464px;color:#111827;-webkit-text-stroke:0.45px;">Customer</span>
<span class="t" style="left:377.92px;top:158.71px;font-size:14.4px;line-height:18px;letter-spacing:0.159px;color:#111827;-webkit-text-stroke:0.45px;">Description</span>
<span class="t" style="left:645.52px;top:158.71px;font-size:14.4px;line-height:18px;letter-spacing:0.060px;color:#111827;-webkit-text-stroke:0.45px;">Product</span>
<span class="t" style="left:913.77px;top:158.71px;font-size:14.4px;line-height:18px;letter-spacing:0.162px;color:#111827;-webkit-text-stroke:0.45px;">Image</span>
<span class="t" style="left:1059.72px;top:158.71px;font-size:14.4px;line-height:18px;letter-spacing:-0.646px;color:#111827;-webkit-text-stroke:0.45px;">Qty</span>
<span class="t" style="left:1118.02px;top:158.71px;font-size:14.4px;line-height:18px;letter-spacing:-0.091px;color:#111827;-webkit-text-stroke:0.45px;">Delivered Quantity</span>
<span class="t" style="left:1271.07px;top:158.71px;font-size:14.4px;line-height:18px;letter-spacing:0.006px;color:#111827;-webkit-text-stroke:0.45px;">Invoiced Quantity</span>
<span class="t" style="left:1422.08px;top:158.71px;font-size:14.4px;line-height:18px;letter-spacing:-0.178px;color:#111827;-webkit-text-stroke:0.45px;">To Invoice Quantity</span>
<span class="t" style="left:1618.55px;top:158.71px;font-size:14.4px;line-height:18px;letter-spacing:0.197px;color:#111827;-webkit-text-stroke:0.45px;">Subtotal</span>
<span class="t" style="left:1691.95px;top:158.71px;font-size:14.4px;line-height:18px;letter-spacing:0.070px;color:#111827;-webkit-text-stroke:0.45px;">Status</span>
<svg style="position:absolute;left:0;top:0" width="1836" height="200" viewBox="0 0 1836 200"><rect x="1818.600" y="162.2" width="4.100" height="2.800" rx="0.500" fill="#2b2f45"/><rect x="1818.600" y="166.2" width="4.100" height="2.800" rx="0.500" fill="#2b2f45"/><rect x="1818.600" y="170.2" width="4.100" height="2.800" rx="0.500" fill="#2b2f45"/></svg>
<div style="position:absolute;left:1833px;top:143px;width:3px;height:790px;background:#f1f1f1;"></div>
<div style="position:absolute;left:1834px;top:158px;width:1px;height:722px;background:#d6d6d6;"></div>
<div style="position:absolute;left:1835px;top:158px;width:1px;height:722px;background:#c1c1c1;"></div>
<div style="position:absolute;left:0px;top:49px;width:1836px;height:93px;background:#fff;border-bottom:1px solid #c9ccd6;"></div>
<span class="t" style="left:17.05px;top:61.87px;font-size:20px;line-height:25px;letter-spacing:-0.023px;color:#111827;">Quotation Lines</span>
<svg style="position:absolute;left:0;top:0" width="60" height="140" viewBox="0 0 60 140"><path d="M33.800 106.700h3.100v4.300h2.800l-4.350 4.500l-4.350-4.500h2.800z" fill="#016f78"/><path d="M28.200 115h4.300l2.850 2.800l2.850-2.800h3.800v3.400a.5.500 0 0 1-.5.500h-12.800a.5.500 0 0 1-.5-.5z" fill="#016f78"/><rect x="38.100" y="116.700" width="1" height="1" fill="#cfe8e9"/><rect x="40" y="116.700" width="1" height="1" fill="#cfe8e9"/></svg>
<span class="t" style="left:926.05px;top:61.81px;font-size:14.4px;line-height:18px;letter-spacing:-0.257px;color:#c3c5cd;">Search...</span>
<div style="position:absolute;left:924px;top:87px;width:906px;height:1px;background:#c9ccd6;"></div>
<svg style="position:absolute;left:0;top:0" width="1836" height="100" viewBox="0 0 1836 100"><circle cx="1822.800" cy="70.700" r="4.300" fill="none" stroke="#3d4256" stroke-width="2"/><path d="M1826 74l3.700 3.500" stroke="#3d4256" stroke-width="2.400" stroke-linecap="round"/></svg>
<svg style="position:absolute;left:0;top:0" width="1200" height="140" viewBox="0 0 1200 140"><path d="M934.600 110.900h9.400l-2.800 3.700v5.300l-3-2.300v-3z" fill="#454a5f" stroke="#454a5f" stroke-width="0.600" stroke-linejoin="round"/></svg>
<span class="t" style="left:946.82px;top:104.81px;font-size:14.4px;line-height:18px;letter-spacing:0.200px;color:#41465a;-webkit-text-stroke:0.35px;">Filters</span>
<svg style="position:absolute;left:0;top:0" width="1200" height="140" viewBox="0 0 1200 140"><rect x="1007.900" y="110.8" width="9.900" height="1.600" fill="#454a5f"/><rect x="1007.900" y="114.1" width="9.900" height="1.600" fill="#454a5f"/><rect x="1007.900" y="117.4" width="9.900" height="1.600" fill="#454a5f"/></svg>
<span class="t" style="left:1020.98px;top:104.81px;font-size:14.4px;line-height:18px;letter-spacing:-0.439px;color:#41465a;-webkit-text-stroke:0.35px;">Group By</span>
<svg style="position:absolute;left:0;top:0" width="1200" height="140" viewBox="0 0 1200 140"><polygon points="1105.00,109.60 1106.70,113.15 1110.61,113.68 1107.76,116.40 1108.47,120.27 1105.00,118.40 1101.53,120.27 1102.24,116.40 1099.39,113.68 1103.30,113.15" fill="#454a5f"/></svg>
<span class="t" style="left:1113.12px;top:104.81px;font-size:14.4px;line-height:18px;letter-spacing:0.048px;color:#41465a;-webkit-text-stroke:0.35px;">Favorites</span>
<span class="t" style="left:1511.00px;top:104.91px;font-size:14.4px;line-height:18px;letter-spacing:-0.143px;color:#454a5e;">1-11 / 11</span>
<svg style="position:absolute;left:0;top:0" width="1836" height="140" viewBox="0 0 1836 140"><path d="M1594 108.400l-5.100 5.100l5.100 5.100" fill="none" stroke="#5a9ea0" stroke-width="3"/><path d="M1618.900 108.400l5.100 5.100l-5.100 5.100" fill="none" stroke="#5a9ea0" stroke-width="3"/></svg>
<div style="position:absolute;left:1655px;top:98px;width:34px;height:31px;border:1px solid #c9ccd6;background:#f4f4f9;"></div>
<svg style="position:absolute;left:0;top:0" width="1836" height="140" viewBox="0 0 1836 140"><circle cx="1667.600" cy="109.8" r="1.650" fill="#0c0f1d"/><rect x="1670.300" y="108.85" width="10.700" height="1.900" rx="0.400" fill="#0c0f1d"/><circle cx="1667.600" cy="113.9" r="1.650" fill="#0c0f1d"/><rect x="1670.300" y="112.95" width="10.700" height="1.900" rx="0.400" fill="#0c0f1d"/><circle cx="1667.600" cy="118.0" r="1.650" fill="#0c0f1d"/><rect x="1670.300" y="117.05" width="10.700" height="1.900" rx="0.400" fill="#0c0f1d"/><rect x="1701.1" y="108.0" width="6" height="4.700" rx="0.700" fill="#454a5f"/><rect x="1701.1" y="114.1" width="6" height="4.700" rx="0.700" fill="#454a5f"/><rect x="1708.4" y="108.0" width="6" height="4.700" rx="0.700" fill="#454a5f"/><rect x="1708.4" y="114.1" width="6" height="4.700" rx="0.700" fill="#454a5f"/><rect x="1735.200" y="108" width="13.100" height="10.800" rx="1" fill="#454a5f"/><rect x="1736.20" y="110.40" width="3.100" height="1.800" fill="#fff"/><rect x="1736.20" y="113.15" width="3.100" height="1.800" fill="#fff"/><rect x="1736.20" y="115.90" width="3.100" height="1.800" fill="#fff"/><rect x="1740.15" y="110.40" width="3.100" height="1.800" fill="#fff"/><rect x="1740.15" y="113.15" width="3.100" height="1.800" fill="#fff"/><rect x="1740.15" y="115.90" width="3.100" height="1.800" fill="#fff"/><rect x="1744.10" y="110.40" width="3.100" height="1.800" fill="#fff"/><rect x="1744.10" y="113.15" width="3.100" height="1.800" fill="#fff"/><rect x="1744.10" y="115.90" width="3.100" height="1.800" fill="#fff"/><path d="M1769.500 107.600v11.800h16.400" fill="none" stroke="#454a5f" stroke-width="1.100"/><rect x="1772.0" y="114.1" width="2.200" height="3.6" fill="#454a5f"/><rect x="1775.2" y="110.0" width="2.200" height="7.7" fill="#454a5f"/><rect x="1778.2" y="111.9" width="2.200" height="5.8" fill="#454a5f"/><rect x="1781.2" y="108.7" width="2.200" height="9.0" fill="#454a5f"/><rect x="1806.100" y="108.900" width="13.500" height="12" rx="0.800" fill="#454a5f"/><rect x="1808.600" y="106.800" width="2.200" height="3.600" rx="1" fill="#454a5f"/><rect x="1814.700" y="106.800" width="2.200" height="3.600" rx="1" fill="#454a5f"/><rect x="1809.200" y="107.600" width="1" height="2.200" fill="#bcd" opacity=".8"/><rect x="1815.300" y="107.600" width="1" height="2.200" fill="#bcd" opacity=".8"/><rect x="1807.10" y="112.20" width="2.200" height="2" fill="#fff"/><rect x="1807.10" y="115.10" width="2.200" height="2" fill="#fff"/><rect x="1807.10" y="118.00" width="2.200" height="2" fill="#fff"/><rect x="1810.20" y="112.20" width="2.200" height="2" fill="#fff"/><rect x="1810.20" y="115.10" width="2.200" height="2" fill="#fff"/><rect x="1810.20" y="118.00" width="2.200" height="2" fill="#fff"/><rect x="1813.30" y="112.20" width="2.200" height="2" fill="#fff"/><rect x="1813.30" y="115.10" width="2.200" height="2" fill="#fff"/><rect x="1813.30" y="118.00" width="2.200" height="2" fill="#fff"/><rect x="1816.40" y="112.20" width="2.200" height="2" fill="#fff"/><rect x="1816.40" y="115.10" width="2.200" height="2" fill="#fff"/><rect x="1816.40" y="118.00" width="2.200" height="2" fill="#fff"/></svg>
<div style="position:absolute;left:0px;top:0px;width:1836px;height:48px;background:#783d68;border-bottom:1px solid #4f2447;"></div>
<div style="position:absolute;left:125px;top:0px;width:78px;height:48px;background:#70395f;"></div>
<svg style="position:absolute;left:0;top:0" width="60" height="48" viewBox="0 0 60 48"><rect x="17.20" y="14.15" width="5.500" height="3.600" rx="0.600" fill="#f4eff3"/><rect x="17.20" y="19.85" width="5.500" height="3.600" rx="0.600" fill="#f4eff3"/><rect x="17.20" y="25.55" width="5.500" height="3.600" rx="0.600" fill="#f4eff3"/><rect x="24.05" y="14.15" width="5.500" height="3.600" rx="0.600" fill="#f4eff3"/><rect x="24.05" y="19.85" width="5.500" height="3.600" rx="0.600" fill="#f4eff3"/><rect x="24.05" y="25.55" width="5.500" height="3.600" rx="0.600" fill="#f4eff3"/><rect x="30.90" y="14.15" width="5.500" height="3.600" rx="0.600" fill="#f4eff3"/><rect x="30.90" y="19.85" width="5.500" height="3.600" rx="0.600" fill="#f4eff3"/><rect x="30.90" y="25.55" width="5.500" height="3.600" rx="0.600" fill="#f4eff3"/></svg>
<span class="t" style="left:53.59px;top:9.77px;font-size:22.3px;line-height:28px;letter-spacing:-0.416px;color:#f7f3f6;-webkit-text-stroke:0.5px;">Sales</span>
<span class="t" style="left:142.61px;top:14.14px;font-size:14.6px;line-height:18px;letter-spacing:-0.340px;color:#f3edf1;">Orders</span>
<span class="t" style="left:220.47px;top:14.14px;font-size:14.6px;line-height:18px;letter-spacing:-0.209px;color:#f3edf1;">To Invoice</span>
<span class="t" style="left:319.60px;top:14.14px;font-size:14.6px;line-height:18px;letter-spacing:0.116px;color:#f3edf1;">Products</span>
<span class="t" style="left:412.50px;top:14.14px;font-size:14.6px;line-height:18px;letter-spacing:-0.046px;color:#f3edf1;">Reporting</span>
<span class="t" style="left:510.06px;top:14.14px;font-size:14.6px;line-height:18px;letter-spacing:-0.021px;color:#f3edf1;">Configuration</span>
<svg style="position:absolute;left:0;top:0" width="1836" height="48" viewBox="0 0 1836 48"><ellipse cx="1599.300" cy="26.300" rx="5.700" ry="4.300" fill="#f3eef2"/><path d="M1601 29.500l3.800 1.900l-1.600-3.600z" fill="#f3eef2"/><ellipse cx="1594.400" cy="22.800" rx="7" ry="5.100" fill="#f3eef2" stroke="#783d68" stroke-width="1.200"/><path d="M1590.300 26.200l-1.900 3.200l4.600-1.700z" fill="#f3eef2"/></svg>
<div style="position:absolute;left:1600px;top:8px;width:20px;height:18.5px;background:#017e84;border-radius:10px;"></div>
<span class="t" style="left:1606.88px;top:10.87px;font-size:10.2px;line-height:13px;letter-spacing:0.000px;color:#fff;-webkit-text-stroke:0.3px;">6</span>
<svg style="position:absolute;left:0;top:0" width="1836" height="48" viewBox="0 0 1836 48"><circle cx="1642" cy="23.9" r="6.2" fill="none" stroke="#f3eef2" stroke-width="2.2"/><path d="M1642.300 19.800v4.700h-3.800" fill="none" stroke="#f3eef2" stroke-width="1.500"/></svg>
<div style="position:absolute;left:1642px;top:9px;width:25px;height:17px;background:#017e84;border-radius:9px;"></div>
<span class="t" style="left:1648.22px;top:10.67px;font-size:10.2px;line-height:13px;letter-spacing:-0.271px;color:#fff;-webkit-text-stroke:0.3px;">11</span>
<svg style="position:absolute;left:0;top:0" width="1836" height="48" viewBox="0 0 1836 48"><defs><clipPath id="avc"><circle cx="1715.5" cy="23.5" r="14.6"/></clipPath><filter id="avb" x="-10%" y="-10%" width="120%" height="120%"><feGaussianBlur stdDeviation=".55"/></filter></defs><g clip-path="url(#avc)"><g filter="url(#avb)"><rect x="1699" y="7" width="33" height="33" fill="#a39243"/><rect x="1700" y="11.5" width="32" height="1.300" fill="#8a7630" opacity=".75"/><rect x="1700" y="14.6" width="32" height="1.300" fill="#8a7630" opacity=".75"/><rect x="1700" y="17.7" width="32" height="1.300" fill="#8a7630" opacity=".75"/><rect x="1700" y="20.8" width="32" height="1.300" fill="#8a7630" opacity=".75"/><rect x="1700" y="23.9" width="32" height="1.300" fill="#8a7630" opacity=".75"/><rect x="1700" y="27.0" width="32" height="1.300" fill="#8a7630" opacity=".75"/><rect x="1700" y="30.1" width="32" height="1.300" fill="#8a7630" opacity=".75"/><rect x="1700" y="33.2" width="32" height="1.300" fill="#8a7630" opacity=".75"/><rect x="1699" y="7" width="9" height="33" fill="#6f5f2a" opacity=".45"/><path d="M1702 40c1-5 4-8 8-9l6 1.500 6-2c4 .5 7 3 8 9.500z" fill="#7d5a43"/><path d="M1714.500 40l1-7.500 6.500-2c3.500.8 5.500 3 6.500 9.500z" fill="#86918f"/><path d="M1709.500 27l1 6.500c2 1.500 6 1.500 8.500-.5l.5-6z" fill="#c38e72"/><path d="M1708.200 17.500c0-4.500 3.300-6.500 7.300-6.300 4.300.2 7.500 2.500 7.300 7.500-.2 4.500-1.300 8-3.300 10.300-1.700 1.900-5.300 2.200-7.300.3-2.500-2.300-4-7-4-11.800z" fill="#dba98f"/><ellipse cx="1715.800" cy="15.800" rx="5" ry="2.600" fill="#ecc9b6" opacity=".8"/><ellipse cx="1707.700" cy="22.300" rx="1" ry="1.900" fill="#c98a70"/><ellipse cx="1722.700" cy="24" rx="1" ry="1.700" fill="#cf9378"/><path d="M1708.300 17.500c-.8-5 2.200-8 7.700-8 5.300 0 8.600 3 8.200 8-.2 2.300-.8 4-1.500 5.500l-.6-5c-.5-2.500-2-3.600-4.200-3.800-3-.2-5.500-.6-7.500.3-1.100.8-1.700 1.800-2.100 3z" fill="#43342a"/><path d="M1707.500 18.800l3 .9c3.500-.6 8-.2 11.500 1.600l1.200.2" fill="none" stroke="#5b4b45" stroke-width=".8" opacity=".85"/><circle cx="1710.300" cy="18.300" r=".7" fill="#2a2224"/><path d="M1712.300 26.200c1.800 1.900 5 2.100 7 .3-1.700 2.800-5.400 2.800-7-.3z" fill="#c96a7a"/><path d="M1712.900 26.400c1.700 1 4.200 1.100 5.900.2" stroke="#f7ece8" stroke-width=".9" fill="none"/></g></g></svg>
<span class="t" style="left:1734.27px;top:13.10px;font-size:15px;line-height:19px;letter-spacing:-0.056px;color:#f3edf1;">Mitchell Admin</span>
<div style="position:absolute;left:125px;top:49px;width:144px;height:180px;background:#fff;border:1px solid #cdd0d9;box-shadow:0 9px 10px -5px rgba(0,0,0,.28);"></div>
<div style="position:absolute;left:127px;top:168px;width:140px;height:25px;border:2px solid #fb0007;background:#ebebeb;"></div>
<span class="t" style="left:148.01px;top:58.84px;font-size:14.6px;line-height:18px;letter-spacing:-0.033px;color:#4a4f62;">Quotations</span>
<span class="t" style="left:148.01px;top:87.84px;font-size:14.6px;line-height:18px;letter-spacing:-0.380px;color:#4a4f62;">Orders</span>
<span class="t" style="left:148.04px;top:115.94px;font-size:14.6px;line-height:18px;letter-spacing:-0.371px;color:#4a4f62;">Sales Teams</span>
<span class="t" style="left:147.96px;top:143.94px;font-size:14.6px;line-height:18px;letter-spacing:-0.089px;color:#4a4f62;">Customers</span>
<span class="t" style="left:148.11px;top:171.64px;font-size:14.6px;line-height:18px;letter-spacing:-0.139px;color:#15192b;">Quotation Lines</span>
<span class="t" style="left:148.11px;top:199.54px;font-size:14.6px;line-height:18px;letter-spacing:-0.366px;color:#4a4f62;">Order Lines</span>
</body></html>
